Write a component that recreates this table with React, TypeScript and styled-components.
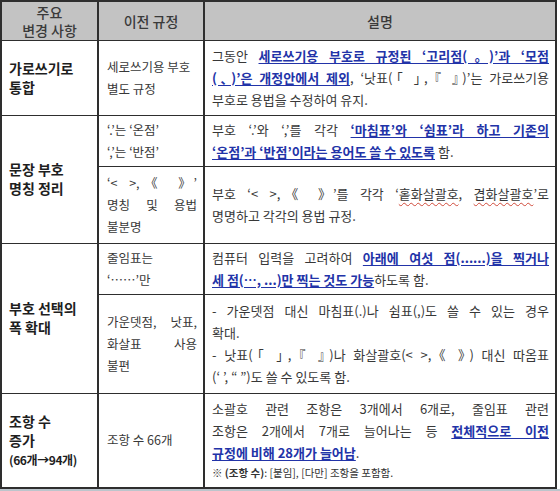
import React from 'react';
import styled, { createGlobalStyle } from 'styled-components';

const GlobalStyle = createGlobalStyle`
  body {
    margin: 0;
    background: #fff;
    font-family: "Noto Sans CJK KR", "Noto Sans", sans-serif;
    color: #333;
  }
`;

const Page = styled.div`
  width: 560px;
  height: 491px;
  display: flex;
  flex-direction: column;
  background: #fff;
`;

const Table = styled.table`
  width: 557px;
  table-layout: fixed;
  border-collapse: collapse;
  border: 2px solid #2e2e2e;
`;

const BottomStrip = styled.div`
  flex: 1;
  background: #bcc5cc;
`;

const Row = styled.tr<{ $h: number }>`
  height: ${(p) => p.$h}px;
`;

const HeadCell = styled.th`
  background: #c3c3c3;
  color: #3a3a3a;
  font-size: 14px;
  font-weight: 500;
  line-height: 18px;
  text-align: center;
  vertical-align: middle;
  border-top: 1px solid #2e2e2e;
  border-bottom: 1px solid #2e2e2e;
  border-left: 2px solid #2e2e2e;
  border-right: 2px solid #2e2e2e;
  padding: 0;
`;

const Cell = styled.td<{ $kind: 'topic' | 'old' | 'desc' }>`
  vertical-align: middle;
  border-top: 1px solid #2e2e2e;
  border-bottom: 1px solid #2e2e2e;
  border-left: 2px solid #2e2e2e;
  border-right: 2px solid #2e2e2e;
  padding: ${(p) => (p.$kind === 'old' ? '0 6px 0 8px' : '0 6px 0 7px')};
  font-size: ${(p) => (p.$kind === 'topic' ? '14px' : p.$kind === 'old' ? '12.5px' : '13px')};
  font-weight: ${(p) => (p.$kind === 'topic' ? 700 : 400)};
  color: ${(p) => (p.$kind === 'topic' ? '#1e1e1e' : '#383838')};
  line-height: ${(p) => (p.$kind === 'topic' ? '19px' : '22px')};
  font-feature-settings: "halt";
`;

const Line = styled.span<{ $fill?: boolean }>`
  display: block;
  white-space: nowrap;
  text-align: ${(p) => (p.$fill ? 'justify' : 'left')};
  text-align-last: ${(p) => (p.$fill ? 'justify' : 'auto')};
`;

const Mark = styled.span`
  color: #2233a8;
  font-weight: 700;
  text-decoration: underline;
  text-underline-offset: 2px;
`;

const Squiggle = styled.span`
  text-decoration: underline wavy #d04a3a;
  text-decoration-thickness: 1px;
  text-underline-offset: 3px;
`;

const Note = styled.span`
  display: block;
  font-size: 10.5px;
  line-height: 18px;
  color: #333;
`;

const Small = styled.span`
  display: block;
  font-size: 12px;
  letter-spacing: -0.4px;
`;

export default function App() {
  return (
    <Page>
      <GlobalStyle />
      <Table>
        <colgroup>
          <col style={{ width: 97 }} />
          <col style={{ width: 106 }} />
          <col />
        </colgroup>
        <tbody>
          <Row $h={39}>
            <HeadCell>
              주요
              <br />
              변경 사항
            </HeadCell>
            <HeadCell>이전 규정</HeadCell>
            <HeadCell>설명</HeadCell>
          </Row>

          <Row $h={75}>
            <Cell $kind="topic">
              <Line>가로쓰기로</Line>
              <Line>통합</Line>
            </Cell>
            <Cell $kind="old">
              <Line>세로쓰기용 부호</Line>
              <Line>별도 규정</Line>
            </Cell>
            <Cell $kind="desc">
              <Line $fill>
                그동안 <Mark>세로쓰기용 부호로 규정된 ‘고리점(｡)’과 ‘모점</Mark>
              </Line>
              <Line $fill>
                <Mark>(､)’은 개정안에서 제외</Mark>, ‘낫표(「 」, 『 』)’는 가로쓰기용
              </Line>
              <Line>부호로 용법을 수정하여 유지.</Line>
            </Cell>
          </Row>

          <Row $h={51}>
            <Cell $kind="topic" rowSpan={2}>
              <Line>문장 부호</Line>
              <Line>명칭 정리</Line>
            </Cell>
            <Cell $kind="old">
              <Line>‘.’는 ‘온점’</Line>
              <Line>‘,’는 ‘반점’</Line>
            </Cell>
            <Cell $kind="desc">
              <Line $fill>
                부호 ‘.’와 ‘,’를 각각 <Mark>‘마침표’와 ‘쉼표’라 하고 기존의</Mark>
              </Line>
              <Line>
                <Mark>‘온점’과 ‘반점’이라는 용어도 쓸 수 있도록</Mark> 함.
              </Line>
            </Cell>
          </Row>
          <Row $h={77}>
            <Cell $kind="old">
              <Line $fill>‘&lt; &gt;, 《 》’</Line>
              <Line $fill>명칭 및 용법</Line>
              <Line>불분명</Line>
            </Cell>
            <Cell $kind="desc">
              <Line $fill>
                부호 ‘&lt; &gt;, 《 》’를 각각 ‘<Squiggle>홑화살괄호</Squiggle>,{' '}
                <Squiggle>겹화살괄호</Squiggle>’로
              </Line>
              <Line>명명하고 각각의 용법 규정.</Line>
            </Cell>
          </Row>

          <Row $h={51}>
            <Cell $kind="topic" rowSpan={2}>
              <Line>부호 선택의</Line>
              <Line>폭 확대</Line>
            </Cell>
            <Cell $kind="old">
              <Line>줄임표는</Line>
              <Line>‘⋯⋯’만</Line>
            </Cell>
            <Cell $kind="desc">
              <Line $fill>
                컴퓨터 입력을 고려하여 <Mark>아래에 여섯 점(......)을 찍거나</Mark>
              </Line>
              <Line>
                <Mark>세 점(⋯, ...)만 찍는 것도 가능</Mark>하도록 함.
              </Line>
            </Cell>
          </Row>
          <Row $h={99}>
            <Cell $kind="old">
              <Line $fill>가운뎃점, 낫표,</Line>
              <Line $fill>화살표 사용</Line>
              <Line>불편</Line>
            </Cell>
            <Cell $kind="desc">
              <Line $fill>- 가운뎃점 대신 마침표(.)나 쉼표(,)도 쓸 수 있는 경우</Line>
              <Line>확대.</Line>
              <Line $fill>- 낫표(「 」, 『 』)나 화살괄호(&lt; &gt;, 《 》) 대신 따옴표</Line>
              <Line>(‘ ’, “ ”)도 쓸 수 있도록 함.</Line>
            </Cell>
          </Row>

          <Row $h={95}>
            <Cell $kind="topic">
              <Line>조항 수</Line>
              <Line>증가</Line>
              <Small>(66개→94개)</Small>
            </Cell>
            <Cell $kind="old">
              <Line>조항 수 66개</Line>
            </Cell>
            <Cell $kind="desc">
              <Line $fill>소괄호 관련 조항은 3개에서 6개로, 줄임표 관련</Line>
              <Line $fill>
                조항은 2개에서 7개로 늘어나는 등 <Mark>전체적으로 이전</Mark>
              </Line>
              <Line>
                <Mark>규정에 비해 28개가 늘어남</Mark>.
              </Line>
              <Note>
                ※ <b>(조항 수)</b>: [붙임], [다만] 조항을 포함함.
              </Note>
            </Cell>
          </Row>
        </tbody>
      </Table>
      <BottomStrip />
    </Page>
  );
}
